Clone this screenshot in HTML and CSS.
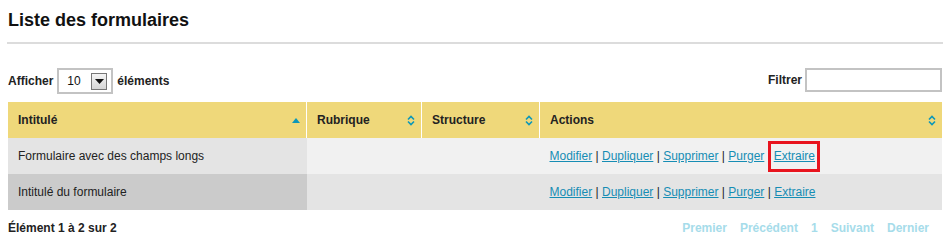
FILE: index.html
```html
<!DOCTYPE html>
<html lang="fr">
<head>
    <meta charset="UTF-8">
    <title>Liste des formulaires</title>
    <link rel="stylesheet" href="styles.css">
</head>
<body>
    <h1 class="page-title">Liste des formulaires</h1>

    <div class="toolbar">
        <div class="length">
            Afficher
            <div class="fake-select">
                <span class="fake-select-value">10</span>
                <span class="fake-select-btn">
                    <svg width="9" height="5" viewBox="0 0 9 5"><path d="M0 0H9L4.5 5Z" fill="#111"/></svg>
                </span>
            </div>
            éléments
        </div>
        <div class="filter">
            <label for="filtre">Filtrer</label>
            <input type="text" id="filtre">
        </div>
    </div>

    <table class="grid">
        <thead>
            <tr>
                <th class="col-title">
                    <div class="th-inner">Intitulé
                        <svg width="8" height="5" viewBox="0 0 8 5"><path d="M4 0L8 5H0Z" fill="#0c97b9"/></svg>
                    </div>
                </th>
                <th class="col-rub">
                    <div class="th-inner">Rubrique
                        <svg width="8" height="11" viewBox="0 0 8 11"><path d="M1 4.5L4 1.5L7 4.5M1 6.5L4 9.5L7 6.5" stroke="#0c97b9" stroke-width="1.6" fill="none"/></svg>
                    </div>
                </th>
                <th class="col-struct">
                    <div class="th-inner">Structure
                        <svg width="8" height="11" viewBox="0 0 8 11"><path d="M1 4.5L4 1.5L7 4.5M1 6.5L4 9.5L7 6.5" stroke="#0c97b9" stroke-width="1.6" fill="none"/></svg>
                    </div>
                </th>
                <th class="col-actions">
                    <div class="th-inner">Actions
                        <svg width="8" height="11" viewBox="0 0 8 11"><path d="M1 4.5L4 1.5L7 4.5M1 6.5L4 9.5L7 6.5" stroke="#0c97b9" stroke-width="1.6" fill="none"/></svg>
                    </div>
                </th>
            </tr>
        </thead>
        <tbody>
            <tr class="odd">
                <td class="sorted">Formulaire avec des champs longs</td>
                <td></td>
                <td></td>
                <td class="actions">
                    <a href="#">Modifier</a> | <a href="#">Dupliquer</a> | <a href="#">Supprimer</a> | <a href="#">Purger</a> <span class="highlight"><a href="#">Extraire</a></span>
                </td>
            </tr>
            <tr class="even">
                <td class="sorted">Intitulé du formulaire</td>
                <td></td>
                <td></td>
                <td class="actions">
                    <a href="#">Modifier</a> | <a href="#">Dupliquer</a> | <a href="#">Supprimer</a> | <a href="#">Purger</a> | <a href="#">Extraire</a>
                </td>
            </tr>
        </tbody>
    </table>

    <div class="footer">
        <div class="info">Élément 1 à 2 sur 2</div>
        <div class="paging">
            <span>Premier</span>
            <span>Précédent</span>
            <span>1</span>
            <span>Suivant</span>
            <span>Dernier</span>
        </div>
    </div>
</body>
</html>
```

FILE: styles.css
```css
body {
    font-family: "Liberation Sans", Arial, sans-serif;
    font-size: 12px;
    color: #222;
    margin: 0;
    padding: 0 10px 0 8px;
    background-color: #fff;
}
.page-title {
    font-size: 18px;
    color: #111;
    margin: 0 -1px;
    padding: 10px 0 0 1px;
    height: 32px;
    border-bottom: 2px solid #dcdcdc;
}
.toolbar {
    display: flex;
    justify-content: space-between;
    align-items: center;
    margin-top: 24px;
    height: 26px;
}
.length {
    display: flex;
    align-items: center;
    font-weight: bold;
    color: #222;
}
.fake-select {
    display: flex;
    align-items: center;
    justify-content: space-between;
    width: 40px;
    height: 22px;
    border: 2px solid #c3c3c3;
    margin: 0 4px;
    padding: 0 4px 0 8px;
    font-weight: normal;
    color: #111;
}
.fake-select-btn {
    display: flex;
    align-items: center;
    justify-content: center;
    width: 14px;
    height: 15px;
    border: 1px solid #777;
    background: linear-gradient(#f4f4f4, #d6d6d6);
}
.filter {
    display: flex;
    align-items: center;
    font-weight: bold;
    margin-top: -2px;
}
.filter input {
    width: 133px;
    height: 20px;
    border: 2px solid #c3c3c3;
    margin: 0 0 0 3px;
    padding: 0;
}
.grid {
    width: 100%;
    border-collapse: collapse;
    margin-top: 8px;
}
.grid th {
    background-color: #efd87a;
    height: 36px;
    padding: 0 0 0 10px;
    text-align: left;
    font-weight: bold;
    color: #222;
    border-left: 1px solid #fff;
}
.grid th:first-child {
    border-left: none;
}
.th-inner {
    display: flex;
    justify-content: space-between;
    align-items: center;
    padding-right: 6px;
}
.col-title { width: 288px; }
.col-rub { width: 104px; }
.col-struct { width: 107px; }
.grid td {
    height: 36px;
    padding: 0 0 0 10px;
    color: #222;
}
.odd td { background-color: #f1f1f1; }
.odd td.sorted { background-color: #e4e4e4; }
.even td { background-color: #e4e4e4; }
.even td.sorted { background-color: #cbcbcb; }
.actions a {
    color: #168db4;
}
.highlight {
    display: inline-block;
    border: 3px solid #e8141e;
    padding: 5px 2px 6px 3px;
    margin-left: 0;
}
.footer {
    display: flex;
    justify-content: space-between;
    align-items: center;
    height: 36px;
}
.info {
    color: #222;
    font-weight: bold;
}
.paging {
    display: flex;
    gap: 13px;
    font-weight: bold;
    color: #a6dcea;
    padding-right: 13px;
}
```
